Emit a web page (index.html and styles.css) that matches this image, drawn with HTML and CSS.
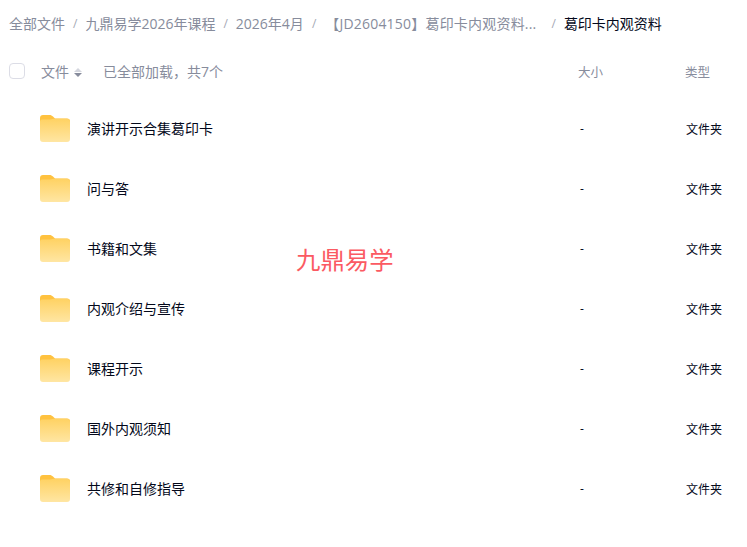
FILE: index.html
```html
<!DOCTYPE html>
<html lang="zh-CN">
<head>
    <meta charset="UTF-8">
    <meta name="viewport" content="width=device-width, initial-scale=1.0">
    <title>葛印卡内观资料</title>
    <link rel="stylesheet" href="styles.css">
</head>
<body>
    <svg class="defs" width="0" height="0">
        <defs>
            <linearGradient id="folderBody" x1="0" y1="0" x2="0" y2="1">
                <stop offset="0" stop-color="#ffd263"/>
                <stop offset="1" stop-color="#ffe6a3"/>
            </linearGradient>
            <symbol id="folder" viewBox="0 0 30 27">
                <path d="M0 3a3 3 0 0 1 3-3h6.500c1.500 0 2.500.6 3.500 1.500L15 3.500h12a3 3 0 0 1 3 3V10H0z" fill="#ffc23f"/>
                <path d="M0 6.500a2 2 0 0 1 2-2h8c2 0 3-.7 4.500-.7H27a3 3 0 0 1 3 3V24a3 3 0 0 1-3 3H3a3 3 0 0 1-3-3z" fill="url(#folderBody)"/>
            </symbol>
        </defs>
    </svg>

    <nav class="crumbs">
        <a>全部文件</a><span class="sep">/</span>
        <a>九鼎易学2026年课程</a><span class="sep">/</span>
        <a>2026年4月</a><span class="sep">/</span>
        <a class="long">【JD2604150】葛印卡内观资料...</a><span class="sep">/</span>
        <span class="current">葛印卡内观资料</span>
    </nav>

    <div class="list-head">
        <span class="check"></span>
        <span class="head-name">文件</span>
        <span class="sort"><i class="up"></i><i class="down"></i></span>
        <span class="loaded">已全部加载，共7个</span>
        <span class="col-size">大小</span>
        <span class="col-type">类型</span>
    </div>

    <ul class="files">
        <li><svg class="folder"><use href="#folder"/></svg><span class="name">演讲开示合集葛印卡</span><span class="size">-</span><span class="type">文件夹</span></li>
        <li><svg class="folder"><use href="#folder"/></svg><span class="name">问与答</span><span class="size">-</span><span class="type">文件夹</span></li>
        <li><svg class="folder"><use href="#folder"/></svg><span class="name">书籍和文集</span><span class="size">-</span><span class="type">文件夹</span></li>
        <li><svg class="folder"><use href="#folder"/></svg><span class="name">内观介绍与宣传</span><span class="size">-</span><span class="type">文件夹</span></li>
        <li><svg class="folder"><use href="#folder"/></svg><span class="name">课程开示</span><span class="size">-</span><span class="type">文件夹</span></li>
        <li><svg class="folder"><use href="#folder"/></svg><span class="name">国外内观须知</span><span class="size">-</span><span class="type">文件夹</span></li>
        <li><svg class="folder"><use href="#folder"/></svg><span class="name">共修和自修指导</span><span class="size">-</span><span class="type">文件夹</span></li>
    </ul>

    <div class="watermark">九鼎易学</div>
</body>
</html>
```

FILE: styles.css
```css
body {
    margin: 0;
    height: 547px;
    position: relative;
    overflow: hidden;
    background: #fff;
    font-family: "Open Sans", "Noto Sans CJK SC", sans-serif;
    font-size: 14px;
    color: #03081a;
}
.defs {
    position: absolute;
}
.crumbs {
    display: flex;
    align-items: center;
    height: 24px;
    padding: 11px 0 0 9px;
    color: #878c9c;
    white-space: nowrap;
}
.sep {
    color: #a5a9b5;
    margin: 0 8px;
    font-size: 12px;
}
.long {
    margin-left: 1px;
    letter-spacing: 0.2px;
    margin-right: 7px;
}
.current {
    color: #03081a;
}
.list-head {
    display: flex;
    align-items: center;
    height: 24px;
    margin-top: 24px;
    padding-left: 9px;
    color: #878c9c;
}
.check {
    width: 14px;
    height: 14px;
    border: 1px solid #dcdde6;
    border-radius: 4px;
}
.head-name {
    margin-left: 16px;
}
.sort {
    display: flex;
    flex-direction: column;
    gap: 1px;
    margin-left: 5px;
    margin-top: 2px;
}
.sort i {
    width: 0;
    height: 0;
    border-left: 4px solid transparent;
    border-right: 4px solid transparent;
}
.sort .up {
    border-bottom: 4px solid #d4d6de;
}
.sort .down {
    border-top: 4px solid #878c9c;
}
.loaded {
    margin-left: 21px;
    width: 475px;
}
.col-size {
    width: 107px;
    font-size: 12.5px;
}
.col-type {
    font-size: 12.5px;
}
.files {
    list-style: none;
    margin: 15px 0 0;
    padding: 0 0 0 40px;
}
.files li {
    display: flex;
    align-items: center;
    height: 60px;
}
.folder {
    width: 30px;
    height: 27px;
}
.name {
    margin-left: 17px;
    width: 493px;
}
.size {
    width: 106px;
    font-size: 12px;
}
.type {
    font-size: 12px;
    padding-top: 1px;
}
.watermark {
    position: absolute;
    left: 296px;
    top: 241px;
    font-size: 24.4px;
    color: #fb5a62;
}
```
